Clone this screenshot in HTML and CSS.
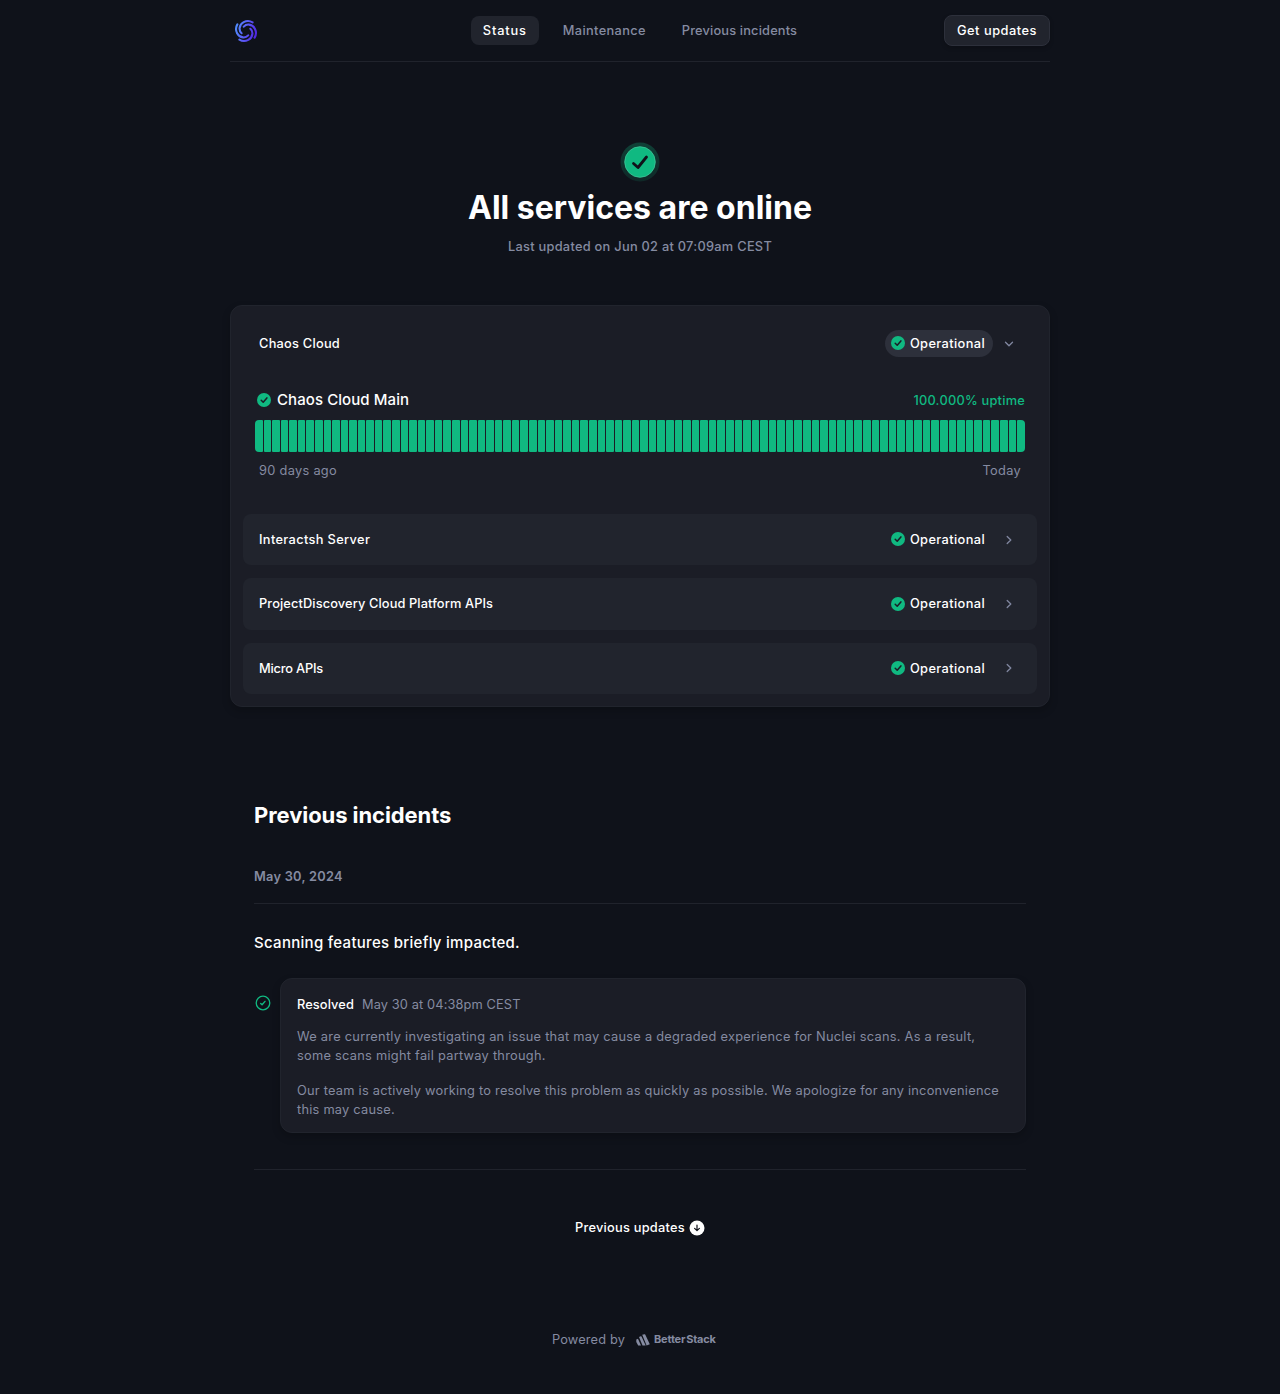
FILE: index.html
```html
<!DOCTYPE html>
<html lang="en">
<head>
<meta charset="utf-8">
<title>Status</title>
<link rel="stylesheet" href="styles.css">
</head>
<body>
<svg class="defs" width="0" height="0" aria-hidden="true">
  <symbol id="check" viewBox="0 0 14 14"><circle cx="7" cy="7" r="7" fill="#10b981"/><path d="M4.2 7.3 6.2 9.3 9.900 4.900" fill="none" stroke="#1b1d26" stroke-width="1.500" stroke-linecap="round" stroke-linejoin="round"/></symbol>
  <symbol id="chevron" viewBox="0 0 10 10"><path d="M3.200 1.500 6.800 5 3.200 8.500" fill="none" stroke="#8187a0" stroke-width="1.300" stroke-linecap="round" stroke-linejoin="round"/></symbol>
</svg>
<div class="container">
  <header class="topbar">
    <a class="brand">
      <svg width="24" height="24" viewBox="0 0 24 24">
        <defs>
          <linearGradient id="brand" x1="0" y1="0.300" x2="1" y2="0.600"><stop offset="0" stop-color="#4f93fd"/><stop offset=".5" stop-color="#5b5cf5"/><stop offset="1" stop-color="#4f1fe0"/></linearGradient>
          <path id="blade" d="M18.600 3.400C15.800 1.700 12.300 1.800 9.700 3.100C7.300 4.300 5.900 6.500 5.600 9C5.400 11 6.200 13 7.600 14.200" fill="none" stroke="#fff" stroke-width="2.100" stroke-linecap="round"/>
          <mask id="swirl" maskUnits="userSpaceOnUse" x="0" y="0" width="24" height="24">
            <use href="#blade"/><use href="#blade" transform="rotate(90 12 12)"/><use href="#blade" transform="rotate(180 12 12)"/><use href="#blade" transform="rotate(270 12 12)"/>
          </mask>
        </defs>
        <rect width="24" height="24" fill="url(#brand)" mask="url(#swirl)"/>
      </svg>
    </a>
    <nav class="nav">
      <a class="nav-link active ls-85">Status</a>
      <a class="nav-link ls-36">Maintenance</a>
      <a class="nav-link ls-17">Previous incidents</a>
    </nav>
    <a class="button ls-50">Get updates</a>
  </header>

  <section class="hero">
    <svg class="hero-icon" width="40" height="40" viewBox="0 0 40 40">
      <defs><linearGradient id="halo" x1="0" y1="0" x2="0" y2="1"><stop offset="0" stop-color="#10b981" stop-opacity=".28"/><stop offset="1" stop-color="#10b981" stop-opacity=".13"/></linearGradient></defs>
      <circle cx="20" cy="20" r="19.500" fill="url(#halo)"/>
      <circle cx="20" cy="20" r="15.300" fill="#10b981" stroke="#40c79a" stroke-width=".8"/>
      <path d="M13.500 21.500 18 25.500 26.500 15" fill="none" stroke="#10121a" stroke-width="2.800" stroke-linecap="round" stroke-linejoin="round"/>
    </svg>
    <h1>All services are online</h1>
    <p class="ls-28">Last updated on Jun 02 at 07:09am CEST</p>
  </section>

  <section class="card">
    <div class="group-head">
      <span class="ls-24">Chaos Cloud</span>
      <span class="badge filled"><svg width="14" height="14"><use href="#check"/></svg>Operational</span>
      <svg class="chevron open" width="10" height="10"><use href="#chevron"/></svg>
    </div>
    <div class="monitor">
      <div class="monitor-head">
        <svg width="14" height="14"><use href="#check"/></svg>
        <span class="monitor-name">Chaos Cloud Main</span>
        <span class="uptime ls-24">100.000% uptime</span>
      </div>
      <div class="bars" id="bars"></div>
      <div class="range"><span>90 days ago</span><span>Today</span></div>
    </div>
    <div class="groups">
      <div class="group-row"><span class="ls-36">Interactsh Server</span><span class="badge"><svg width="14" height="14"><use href="#check"/></svg><span>Operational</span></span><svg class="chevron" width="10" height="10"><use href="#chevron"/></svg></div>
      <div class="group-row"><span class="ls-12">ProjectDiscovery Cloud Platform APIs</span><span class="badge"><svg width="14" height="14"><use href="#check"/></svg><span>Operational</span></span><svg class="chevron" width="10" height="10"><use href="#chevron"/></svg></div>
      <div class="group-row"><span class="ls-tight">Micro APIs</span><span class="badge"><svg width="14" height="14"><use href="#check"/></svg><span>Operational</span></span><svg class="chevron" width="10" height="10"><use href="#chevron"/></svg></div>
    </div>
  </section>

  <section class="incidents">
    <h2>Previous incidents</h2>
    <h3>May 30, 2024</h3>
    <h4>Scanning features briefly impacted.</h4>
    <div class="update">
      <svg class="update-icon" width="16" height="16" viewBox="0 0 16 16" fill="none" stroke="#10b981" stroke-linecap="round" stroke-linejoin="round"><circle cx="8" cy="8" r="6.800" stroke-width="1.300"/><path d="M5.700 8.400 7.100 9.800 10 6.400" stroke-width="1.400"/></svg>
      <div class="update-card">
        <div class="update-head"><b>Resolved</b><span class="ls-12">May 30 at 04:38pm CEST</span></div>
        <p>We are currently investigating an issue that may cause a degraded experience for Nuclei scans. As a result, some scans might fail partway through.</p>
        <p class="ls-24">Our team is actively working to resolve this problem as quickly as possible. We apologize for any inconvenience this may cause.</p>
      </div>
    </div>
    <a class="more ls-24">Previous updates<svg width="16" height="16" viewBox="0 0 16 16"><circle cx="8" cy="8" r="7.500" fill="#fff"/><path d="M8 5v5.500M5.600 8.300 8 10.700l2.400-2.400" fill="none" stroke="#10121a" stroke-width="1.200" stroke-linecap="round" stroke-linejoin="round"/></svg></a>
  </section>

  <footer class="footer">
    <span>Powered by</span>
    <a class="betterstack">
      <svg width="14" height="12" viewBox="0 0 14 12" fill="#858ba1"><path d="M6.200.8 8.400.2Q8.900 0 9.200.6L13.800 10.300 10.600 11.500Z"/><path d="M3 3 4.600 2.200Q5.200 2 5.500 2.600L9.700 11.500H6.500Z"/><path d="M.3 5.600 1.500 4.900Q2 4.700 2.200 5.200L5 11.500H2.200L.3 8Z"/></svg>
      <span>Better Stack</span>
    </a>
  </footer>
</div>
<script src="bars.js"></script>
</body>
</html>
```
FILE: styles.css
```css
* { box-sizing: border-box; margin: 0; padding: 0; }
body {
  background: #0f121a;
  color: #fff;
  font: 500 12.8px/19px Inter, sans-serif;
  min-height: 1394px;
}
.defs { display: block; height: 0; }
svg { display: block; flex: none; }
.container { width: 820px; margin: 0 auto; }

.topbar {
  display: grid;
  grid-template-columns: 1fr auto 1fr;
  align-items: center;
  height: 62px;
  border-bottom: 1px solid #20232c;
}
.brand { padding-left: 4px; }
.nav { display: flex; gap: 12px; }
.nav-link { padding: 5px 12px; border-radius: 8px; color: #858ba1; }
.nav-link.active { background: #21242d; color: #fff; }
.button {
  justify-self: end;
  padding: 5px 12px;
  border: 1px solid #2d303b;
  border-radius: 8px;
  background: #21242d;
  box-shadow: 0 2px 4px rgba(0, 0, 0, 0.2);
}

.hero { display: flex; flex-direction: column; align-items: center; padding-top: 80px; }
.hero h1 { font-size: 32px; line-height: 40px; font-weight: 700; margin-top: 6px; }
.hero p { color: #858ba1; margin-top: 9px; }

.card {
  height: 402px;
  margin-top: 49px;
  padding: 24px 12px 12px;
  border: 1px solid #21242d;
  border-radius: 12px;
  background: #1b1d26;
  box-shadow: 0 4px 8px rgba(0, 0, 0, 0.2);
}
.group-head, .group-row { display: flex; align-items: center; padding: 0 23px 0 16px; }
.badge {
  display: flex;
  align-items: center;
  gap: 5px;
  height: 27px;
  margin-left: auto;
  padding: 0 8px 0 6px;
  border-radius: 14px;
  letter-spacing: 0.38px;
}
.badge svg { margin-bottom: 1px; }
.badge.filled { background: #2d303b; }
.chevron { margin-left: 11px; }
.chevron.open { transform: rotate(90deg); }
.monitor { padding: 33px 12px 0; }
.monitor-head { display: flex; align-items: center; height: 20px; padding-left: 2px; }
.monitor-name { font-size: 15px; margin: -1px 0 0 6px; letter-spacing: 0.08px; }
.uptime { color: #10b981; margin-left: auto; }
.bars { display: flex; gap: 1px; height: 32px; margin-top: 10px; }
.bars span { flex: 1; background: #10b981; border-radius: 1px; }
.bars span:first-child { border-radius: 4px 1px 1px 4px; }
.bars span:last-child { border-radius: 1px 4px 4px 1px; }
.range {
  display: flex;
  justify-content: space-between;
  margin-top: 9px;
  padding: 0 4px;
  color: #858ba1;
  font-weight: 400;
  letter-spacing: 0.3px;
}
.groups { display: grid; gap: 13px; margin-top: 34px; }
.group-row { height: 51.4px; border-radius: 8px; background: #21242d; }
.group-row:nth-child(2) span:not(.badge) { margin-bottom: 1px; }

.incidents { padding: 93px 24px 0; }
h2 { font-size: 22px; line-height: 30px; font-weight: 700; letter-spacing: -0.08px; }
h3 {
  margin-top: 37px;
  padding-bottom: 17px;
  border-bottom: 1px solid #20232c;
  color: #858ba1;
  font-size: 12.8px;
  line-height: 19px;
  font-weight: 600;
  letter-spacing: 0.25px;
}
h4 { margin-top: 28px; font-size: 15px; line-height: 22px; font-weight: 500; letter-spacing: 0.29px; }
.update {
  display: flex;
  margin-top: 24px;
  padding-bottom: 36px;
  border-bottom: 1px solid #20232c;
}
.update-icon { margin: 17px 9px 0 1px; }
.update-card {
  flex: 1;
  height: 155px;
  padding: 16px;
  border: 1px solid #21242d;
  border-radius: 12px;
  background: #1b1d26;
  box-shadow: 0 4px 8px rgba(0, 0, 0, 0.2);
  color: #858ba1;
  font-weight: 400;
  letter-spacing: 0.27px;
}
.update-head { display: flex; gap: 8px; margin-bottom: 13px; }
.update-head b { color: #fff; font-weight: 500; letter-spacing: 0.11px; }
.update-card p + p { margin-top: 16px; }
.more { display: flex; justify-content: center; align-items: center; gap: 4px; margin-top: 48px; }

.footer {
  display: flex;
  align-items: center;
  gap: 11px;
  margin-top: 93px;
  padding-left: 322px;
  color: #858ba1;
  font-weight: 400;
  letter-spacing: 0.15px;
}
.betterstack {
  display: flex;
  align-items: center;
  gap: 4px;
  font-size: 11px;
  font-weight: 700;
  letter-spacing: -0.2px;
  word-spacing: -1.5px;
}

.ls-tight { letter-spacing: -0.17px; }
.ls-12 { letter-spacing: 0.12px; }
.ls-17 { letter-spacing: 0.17px; }
.ls-24 { letter-spacing: 0.24px; }
.ls-28 { letter-spacing: 0.28px; }
.ls-36 { letter-spacing: 0.35px; }
.ls-50 { letter-spacing: 0.52px; }
.ls-85 { letter-spacing: 0.85px; }
```
FILE: bars.js
```js
const bars = document.getElementById('bars');
for (let day = 0; day < 90; day++) {
  bars.appendChild(document.createElement('span'));
}
```
